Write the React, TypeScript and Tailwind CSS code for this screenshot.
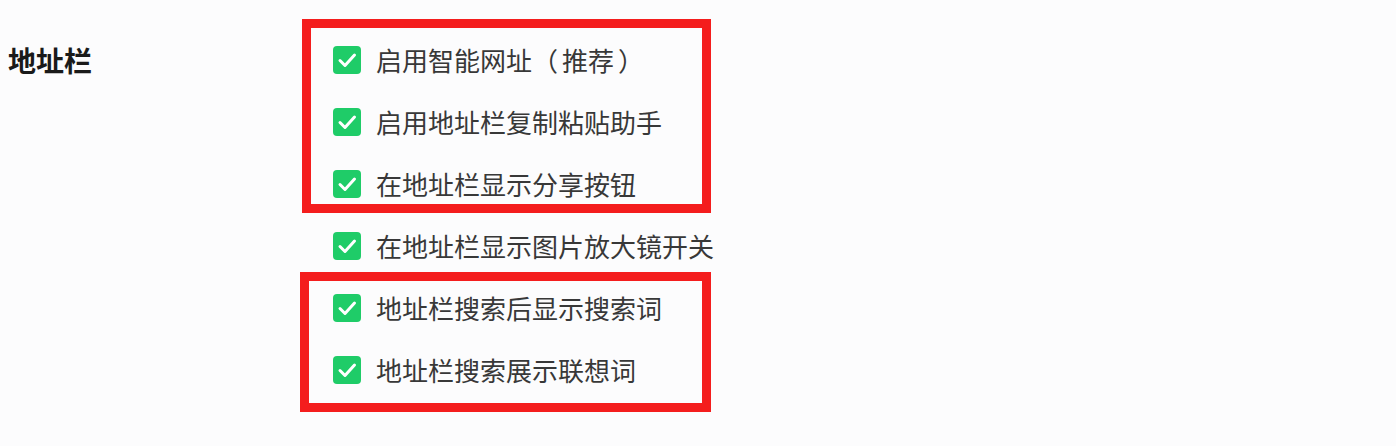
import React from 'react';

const groupOne = ['启用智能网址（推荐）', '启用地址栏复制粘贴助手', '在地址栏显示分享按钮'];
const single = '在地址栏显示图片放大镜开关';
const groupTwo = ['地址栏搜索后显示搜索词', '地址栏搜索展示联想词'];

const CheckIcon: React.FC = () => (
    <span className="flex h-[28px] w-[28px] shrink-0 items-center justify-center rounded-[4px] bg-[#1fcc68]">
        <svg viewBox="0 0 28 28" className="h-[28px] w-[28px]">
            <polyline
                points="7,14.5 12,19.5 21.5,9"
                fill="none"
                stroke="#ffffff"
                strokeWidth="3"
                strokeLinecap="round"
                strokeLinejoin="round"
            />
        </svg>
    </span>
);

// 全角括号里的内容两侧留一点空
const renderLabel = (label: string) => {
    const match = label.match(/^(.*)（(.*)）$/);
    if (!match) return label;
    return (
        <>
            {match[1]}（<span className="px-[4px]">{match[2]}</span>）
        </>
    );
};

const Option: React.FC<{ label: string }> = ({ label }) => (
    <label className="flex h-[28px] items-center gap-[15px]">
        <CheckIcon />
        <span className="text-[26px] leading-[28px] text-[#383838] whitespace-nowrap">{renderLabel(label)}</span>
    </label>
);

const App: React.FC = () => {
    return (
        <div
            className="flex min-h-screen bg-[#fcfcfd] pl-[8px] pt-[19px]"
            style={{ fontFamily: '"Noto Sans CJK SC", "Noto Sans", sans-serif' }}
        >
            {/* 左侧标题 */}
            <div className="w-[294px] shrink-0 pt-[26px]">
                <h2 className="text-[28px] font-bold leading-[30px] text-[#1a1a1a]">地址栏</h2>
            </div>

            {/* 右侧选项 */}
            <div className="flex flex-col">
                <div className="flex w-[409px] flex-col gap-[34px] border-[9px] border-[#f41d1d] pb-[6px] pl-[22px] pt-[18px]">
                    {groupOne.map((item) => (
                        <Option key={item} label={item} />
                    ))}
                </div>

                <div className="mt-[19px] pl-[31px]">
                    <Option label={single} />
                </div>

                <div className="-ml-[2px] mt-[12px] flex w-[411px] flex-col gap-[34px] border-[9px] border-[#f41d1d] pb-[19px] pl-[24px] pt-[13px]">
                    {groupTwo.map((item) => (
                        <Option key={item} label={item} />
                    ))}
                </div>
            </div>
        </div>
    );
};

export default App;
